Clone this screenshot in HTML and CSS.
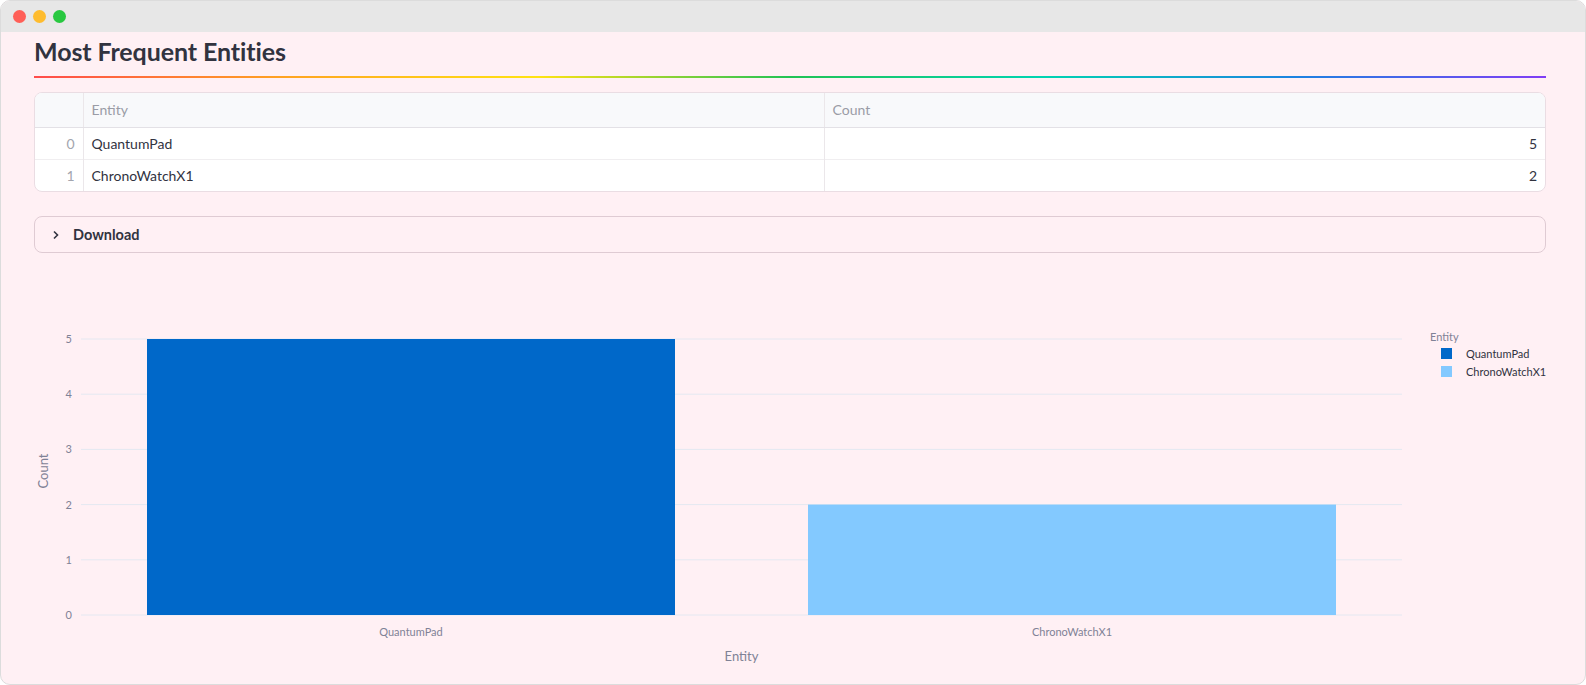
FILE: index.html
```html
<!DOCTYPE html>
<html lang="en">
  <head>
    <meta charset="UTF-8">
    <title>Most Frequent Entities</title>
    <link rel="stylesheet" href="styles.css">
  </head>
  <body>
    <div class="window">
      <div class="titlebar">
        <span class="dot red"></span>
        <span class="dot yellow"></span>
        <span class="dot green"></span>
      </div>

      <main class="main">
        <h3 class="heading">Most Frequent Entities</h3>
        <hr class="rainbow">

        <div class="frame">
          <table class="grid">
            <thead>
              <tr>
                <th class="idx"></th>
                <th class="col-entity">Entity</th>
                <th>Count</th>
              </tr>
            </thead>
            <tbody>
              <tr>
                <td class="idx">0</td>
                <td>QuantumPad</td>
                <td class="num">5</td>
              </tr>
              <tr>
                <td class="idx">1</td>
                <td>ChronoWatchX1</td>
                <td class="num">2</td>
              </tr>
            </tbody>
          </table>
        </div>

        <div class="expander">
          <svg class="chevron" width="10" height="10" viewBox="0 0 10 10">
            <path d="M3 1.5 L6.5 5 L3 8.5" fill="none" stroke="#31333f" stroke-width="1.6"/>
          </svg>
          <span>Download</span>
        </div>

        <div class="chart">
          <svg width="1512" height="415" viewBox="0 0 1512 415">
            <g class="gridlines">
              <line x1="47" x2="1368" y1="68" y2="68"/>
              <line x1="47" x2="1368" y1="123.2" y2="123.2"/>
              <line x1="47" x2="1368" y1="178.4" y2="178.4"/>
              <line x1="47" x2="1368" y1="233.6" y2="233.6"/>
              <line x1="47" x2="1368" y1="288.8" y2="288.8"/>
              <line x1="47" x2="1368" y1="344" y2="344"/>
            </g>
            <g class="ticks" text-anchor="end">
              <text x="38" y="72">5</text>
              <text x="38" y="127">4</text>
              <text x="38" y="182">3</text>
              <text x="38" y="238">2</text>
              <text x="38" y="293">1</text>
              <text x="38" y="348">0</text>
            </g>
            <rect x="113" y="68" width="528" height="276" fill="#0068c9"/>
            <rect x="774" y="233.6" width="528" height="110.4" fill="#83c9ff"/>
            <g class="ticks" text-anchor="middle">
              <text x="377" y="365">QuantumPad</text>
              <text x="1038" y="365">ChronoWatchX1</text>
            </g>
            <text class="axis-title" x="707.5" y="390" text-anchor="middle">Entity</text>
            <text class="axis-title" transform="translate(14 200) rotate(-90)" text-anchor="middle">Count</text>
            <g class="legend">
              <text class="legend-title" x="1396" y="70">Entity</text>
              <rect x="1407" y="77" width="11" height="11" fill="#0068c9"/>
              <text x="1432" y="87">QuantumPad</text>
              <rect x="1407" y="95" width="11" height="11" fill="#83c9ff"/>
              <text x="1432" y="105">ChronoWatchX1</text>
            </g>
          </svg>
        </div>
      </main>
    </div>
  </body>
</html>
```

FILE: styles.css
```css
html {
  box-sizing: border-box;
  font-family: Lato, "Noto Sans", sans-serif;
}

*,
*:before,
*:after {
  box-sizing: inherit;
}

body {
  background: #ffffff;
  margin: 0;
}

.window {
  background: #fff0f4;
  border: 1px solid #dcdcdc;
  border-radius: 10px;
  height: 685px;
  overflow: hidden;
}

.titlebar {
  align-items: center;
  background: #e7e7e7;
  display: flex;
  gap: 7px;
  height: 31px;
  padding-left: 12px;
}

.dot {
  border-radius: 50%;
  display: block;
  height: 13px;
  width: 13px;
}

.red {
  background: #ff5f57;
}

.yellow {
  background: #febc2e;
}

.green {
  background: #28c840;
}

.main {
  color: #31333f;
  padding: 0 39px 0 33px;
}

.heading {
  color: #31333f;
  font-size: 25px;
  font-weight: 700;
  letter-spacing: -0.1px;
  line-height: 34px;
  margin: 2px 0 0;
}

.rainbow {
  background: linear-gradient(to right, #ff4b4b, #ffa421, #ffe312, #21c354, #00d4b1, #1c83e1, #803df5);
  border: 0;
  height: 2px;
  margin: 8px 0 0;
}

.frame {
  background: #ffffff;
  border: 1px solid #eadde3;
  border-radius: 8px;
  margin-top: 14px;
  overflow: hidden;
}

.grid {
  border-collapse: collapse;
  font-size: 14px;
  width: 100%;
}

.grid th,
.grid td {
  border-left: 1px solid #ebe7ea;
  padding: 0 8px;
  text-align: left;
}

.grid th:first-child,
.grid td:first-child {
  border-left: 0;
}

.grid th {
  background: #f8f9fb;
  border-bottom: 1px solid #e3e1e6;
  color: #9a9ca6;
  font-weight: 400;
  height: 34px;
}

.grid td {
  border-top: 1px solid #f0eef0;
  height: 32px;
}

.grid tbody tr:first-child td {
  border-top: 0;
}

.grid .idx {
  color: #a3a5ae;
  text-align: right;
  width: 48px;
}

.col-entity {
  width: 741px;
}

.grid .num {
  text-align: right;
}

.expander {
  align-items: center;
  border: 1px solid #dfcbd3;
  border-radius: 8px;
  display: flex;
  font-size: 14.5px;
  font-weight: 700;
  gap: 12px;
  height: 37px;
  margin-top: 24px;
  padding-left: 16px;
}

.chevron {
  display: block;
}

.chart {
  margin-top: 18px;
}

.chart svg {
  display: block;
  font-family: Lato, "Noto Sans", sans-serif;
}

.gridlines line {
  stroke: #e4e8f1;
  stroke-width: 1;
}

.ticks {
  fill: #7f8296;
  font-size: 11px;
}

.axis-title {
  fill: #7f8296;
  font-size: 13px;
}

.legend {
  fill: #31333f;
  font-size: 11px;
}

.legend-title {
  fill: #7f8296;
}
```
